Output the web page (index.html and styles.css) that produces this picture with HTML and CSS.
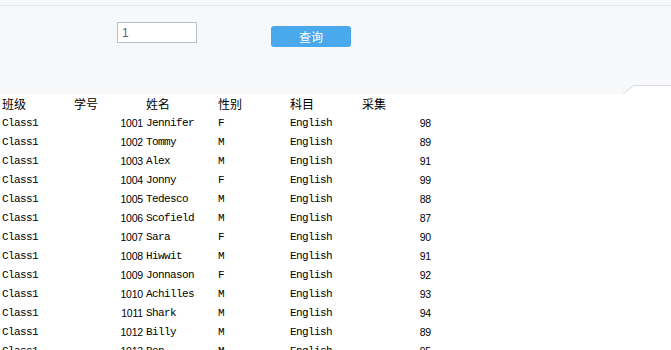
FILE: index.html
```html
<!DOCTYPE html>
<html lang="zh-CN">
<head>
  <meta charset="utf-8">
  <title>成绩查询</title>
  <link rel="stylesheet" href="styles.css">
</head>
<body>
  <div class="query-panel">
    <div class="query-inner">
      <div class="query-form">
        <input class="query-input" type="text" value="1">
        <button class="query-btn">查询</button>
      </div>
      <svg class="panel-tab" width="48" height="9" viewBox="0 0 48 9">
        <polygon points="0,9 11,0.5 48,0.5 48,9" fill="#fff"/>
        <polyline points="0,9 11,0.5 48,0.5" fill="none" stroke="#d9dbde" stroke-width="1"/>
      </svg>
    </div>
  </div>

  <table class="score-table">
    <thead>
      <tr>
        <th>班级</th><th>学号</th><th>姓名</th><th>性别</th><th>科目</th><th>采集</th>
      </tr>
    </thead>
    <tbody>
      <tr><td>Class1</td><td class="num">1001</td><td>Jennifer</td><td>F</td><td>English</td><td class="num">98</td></tr>
      <tr><td>Class1</td><td class="num">1002</td><td>Tommy</td><td>M</td><td>English</td><td class="num">89</td></tr>
      <tr><td>Class1</td><td class="num">1003</td><td>Alex</td><td>M</td><td>English</td><td class="num">91</td></tr>
      <tr><td>Class1</td><td class="num">1004</td><td>Jonny</td><td>F</td><td>English</td><td class="num">99</td></tr>
      <tr><td>Class1</td><td class="num">1005</td><td>Tedesco</td><td>M</td><td>English</td><td class="num">88</td></tr>
      <tr><td>Class1</td><td class="num">1006</td><td>Scofield</td><td>M</td><td>English</td><td class="num">87</td></tr>
      <tr><td>Class1</td><td class="num">1007</td><td>Sara</td><td>F</td><td>English</td><td class="num">90</td></tr>
      <tr><td>Class1</td><td class="num">1008</td><td>Hiwwit</td><td>M</td><td>English</td><td class="num">91</td></tr>
      <tr><td>Class1</td><td class="num">1009</td><td>Jonnason</td><td>F</td><td>English</td><td class="num">92</td></tr>
      <tr><td>Class1</td><td class="num">1010</td><td>Achilles</td><td>M</td><td>English</td><td class="num">93</td></tr>
      <tr><td>Class1</td><td class="num">1011</td><td>Shark</td><td>M</td><td>English</td><td class="num">94</td></tr>
      <tr><td>Class1</td><td class="num">1012</td><td>Billy</td><td>M</td><td>English</td><td class="num">89</td></tr>
      <tr><td>Class1</td><td class="num">1013</td><td>Ben</td><td>M</td><td>English</td><td class="num">95</td></tr>
    </tbody>
  </table>
</body>
</html>
```

FILE: styles.css
```css
body {
  margin: 0;
  background-color: #fff;
  color: #000;
  font-family: "Liberation Sans", "Noto Sans CJK SC", sans-serif;
  font-size: 12px;
}

.query-panel {
  background-color: #f7f8fa;
  padding-top: 5px;
}
.query-inner {
  position: relative;
  height: 88px;
  border-top: 1px solid #e4e6e9;
}
.query-form {
  display: flex;
  align-items: flex-start;
  padding: 16px 0 0 117px;
}
.query-input {
  box-sizing: border-box;
  width: 80px;
  height: 21px;
  margin: 0;
  padding: 0 4px;
  border: 1px solid #b9bdcc;
  background-color: #fff;
  color: #666;
  font-family: "Liberation Sans", sans-serif;
  font-size: 12px;
  outline: none;
}
.query-btn {
  width: 80px;
  height: 21px;
  margin: 4px 0 0 74px;
  padding: 0;
  border: none;
  border-radius: 3px;
  background-color: #4aa8ec;
  color: #fff;
  font-family: "Noto Sans CJK SC", sans-serif;
  font-size: 12px;
  cursor: pointer;
}
.panel-tab {
  position: absolute;
  right: 0;
  bottom: 0;
  display: block;
}

.score-table {
  border-collapse: collapse;
  table-layout: fixed;
}
.score-table th,
.score-table td {
  width: 72px;
  height: 19px;
  padding: 0 0 0 2px;
  text-align: left;
  vertical-align: middle;
  white-space: nowrap;
  box-sizing: border-box;
}
.score-table th {
  font-family: "Noto Sans CJK SC", sans-serif;
  font-weight: normal;
  font-size: 12px;
  line-height: 19px;
}
.score-table td {
  font-family: "Liberation Mono", monospace;
  font-size: 11px;
  letter-spacing: -0.6px;
  line-height: 17px;
  padding-top: 2px;
}
.score-table td.num {
  font-family: "Liberation Sans", sans-serif;
  font-size: 10.5px;
  letter-spacing: -0.2px;
  text-align: right;
  padding: 2px 1px 0 0;
}
```
